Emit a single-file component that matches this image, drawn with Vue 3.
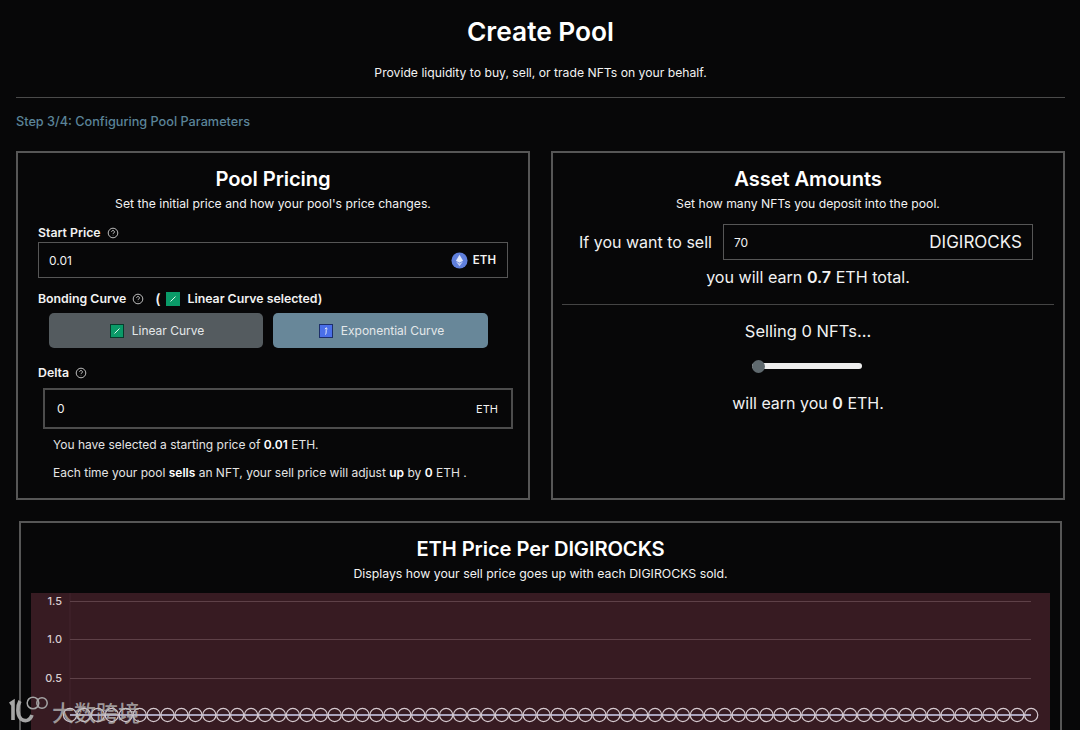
<script setup>
import { computed } from 'vue'

const chartWidth = 1019
const chartHeight = 140
const gridLines = [
  { label: '1.5', y: 8.5 },
  { label: '1.0', y: 46.5 },
  { label: '0.5', y: 85.5 },
]
const points = computed(() => Array.from({ length: 70 }, (_, i) => 39 + i * 13.93))
</script>

<template>
  <main class="page">
    <header class="head">
      <h1>Create Pool</h1>
      <p>Provide liquidity to buy, sell, or trade NFTs on your behalf.</p>
    </header>
    <div class="step">Step 3/4: Configuring Pool Parameters</div>

    <section class="panels">
      <div class="panel pricing">
        <h2>Pool Pricing</h2>
        <p class="sub">Set the initial price and how your pool's price changes.</p>

        <label class="field-label">Start Price
          <svg class="help" viewBox="0 0 12 12"><circle cx="6" cy="6" r="4.8" /><path d="M4.6 4.9a1.4 1.4 0 1 1 2.2 1.1c-.5.3-.8.6-.8 1.1M6 8.6v.3" /></svg>
        </label>
        <div class="input start">
          <span>0.01</span>
          <span class="unit">
            <svg class="eth" viewBox="0 0 18 18">
              <circle cx="9" cy="9" r="8.5" fill="#5f7fdc" />
              <path d="M9 2.8 5.2 9.2 9 11.4l3.8-2.2z" fill="#dfe6fb" />
              <path d="M9 12.3 5.2 10.1 9 15.2l3.8-5.1z" fill="#c3cff5" />
            </svg>
            <b>ETH</b>
          </span>
        </div>

        <div class="field-label curve-label">Bonding Curve
          <svg class="help" viewBox="0 0 12 12"><circle cx="6" cy="6" r="4.8" /><path d="M4.6 4.9a1.4 1.4 0 1 1 2.2 1.1c-.5.3-.8.6-.8 1.1M6 8.6v.3" /></svg>
          <span class="paren">(</span>
          <svg class="curve-icon" viewBox="0 0 14 14"><rect width="14" height="14" fill="#0a9a68" /><path d="M4.5 9.5 9.5 4.5" stroke="#d8f5e8" fill="none" /></svg>
          <span>Linear Curve selected)</span>
        </div>
        <div class="curve-buttons">
          <button class="linear">
            <svg class="curve-icon" viewBox="0 0 14 14"><rect x=".5" y=".5" width="13" height="13" fill="#0a9a68" stroke="#063d2c" /><path d="M4.5 9.5 9.5 4.5" stroke="#d8f5e8" fill="none" /></svg>
            Linear Curve
          </button>
          <button class="expo">
            <svg class="curve-icon" viewBox="0 0 14 14"><rect x=".5" y=".5" width="13" height="13" fill="#4a6fe8" stroke="#1d2f6b" /><path d="M6 10.5c1.2 0 1.2-2 1.2-6.5M5.9 5 7.2 3.8 8.5 5" stroke="#e4eafc" fill="none" /></svg>
            Exponential Curve
          </button>
        </div>

        <label class="field-label delta-label">Delta
          <svg class="help" viewBox="0 0 12 12"><circle cx="6" cy="6" r="4.8" /><path d="M4.6 4.9a1.4 1.4 0 1 1 2.2 1.1c-.5.3-.8.6-.8 1.1M6 8.6v.3" /></svg>
        </label>
        <div class="input delta">
          <span>0</span>
          <span class="unit-plain">ETH</span>
        </div>
        <p class="note first">You have selected a starting price of <b>0.01</b> ETH.</p>
        <p class="note">Each time your pool <b>sells</b> an NFT, your sell price will adjust <b>up</b> by <b>0</b> ETH .</p>
      </div>

      <div class="panel amounts">
        <h2>Asset Amounts</h2>
        <p class="sub">Set how many NFTs you deposit into the pool.</p>
        <div class="sell-row">
          <span>If you want to sell</span>
          <div class="input sell">
            <span class="qty">70</span>
            <span>DIGIROCKS</span>
          </div>
        </div>
        <p class="earn">you will earn <b>0.7</b> ETH total.</p>
        <hr />
        <p class="selling">Selling 0 NFTs...</p>
        <div class="slider"><span class="thumb"></span></div>
        <p class="earn-you">will earn you <b>0</b> ETH.</p>
      </div>
    </section>

    <section class="panel chart-panel">
      <h2>ETH Price Per DIGIROCKS</h2>
      <p class="sub">Displays how your sell price goes up with each DIGIROCKS sold.</p>
      <svg class="chart" :viewBox="`0 0 ${chartWidth} ${chartHeight}`" :width="chartWidth" :height="chartHeight">
        <rect :width="chartWidth" :height="chartHeight" fill="#371b22" />
        <line x1="39" y1="0" x2="39" y2="140" stroke="#42252c" />
        <g v-for="line in gridLines" :key="line.y">
          <line x1="39" :y1="line.y" x2="1000" :y2="line.y" stroke="#5e4148" />
          <text x="31" :y="line.y + 3.5" text-anchor="end" class="tick">{{ line.label }}</text>
        </g>
        <line x1="39" y1="122" x2="1000" y2="122" stroke="#a9a3bd" stroke-width="2" />
        <circle v-for="x in points" :key="x" :cx="x" cy="122" r="6.6" fill="none" stroke="#d5c9cf" stroke-width="1.2" />
      </svg>
    </section>

    <div class="watermark">
      <svg viewBox="0 0 40 30" width="40" height="30">
        <path d="M1 9 4 7v18M11 6c-3 5-3 14 1 18 4 3 9 2 11-4" fill="none" stroke="#a5a5a5" stroke-width="3.6" />
        <circle cx="24" cy="8" r="5.8" fill="none" stroke="#a5a5a5" stroke-width="1.5" />
        <circle cx="33" cy="8" r="5.2" fill="none" stroke="#a5a5a5" stroke-width="1.5" />
      </svg>
      <span>大数跨境</span>
    </div>
  </main>
</template>

<style>
html,
body {
  margin: 0;
  background: #070708;
  overflow: hidden;
}
</style>

<style scoped>
.page {
  position: relative;
  width: 1080px;
  height: 730px;
  overflow: hidden;
  box-sizing: border-box;
  padding: 0 15px 0 16px;
  color: #f2f2f2;
  font-family: Inter, 'Liberation Sans', sans-serif;
}

.head {
  height: 97px;
  border-bottom: 1px solid #4a4a4a;
  text-align: center;
}

.head h1 {
  margin: 0;
  padding-top: 15px;
  font-size: 26.3px;
  line-height: 34px;
  font-weight: 600;
  color: #fff;
}

.head p {
  margin: 15px 0 0;
  font-size: 12.2px;
  line-height: 18px;
}

.step {
  margin-top: 15px;
  font-size: 12.7px;
  line-height: 18px;
  font-weight: 500;
  color: #5b8499;
}

.panels {
  display: grid;
  grid-template-columns: 514px 514px;
  gap: 21px;
  margin-top: 20px;
}

.panel {
  box-sizing: border-box;
  border: 2px solid #565656;
  text-align: center;
}

.pricing,
.amounts {
  height: 349px;
  padding-top: 13px;
}

h2 {
  margin: 0;
  font-size: 20.2px;
  line-height: 26px;
  font-weight: 600;
  letter-spacing: -0.1px;
  color: #fff;
}

.sub {
  margin: 3px 0 0;
  font-size: 12.2px;
  line-height: 18px;
}

.pricing {
  padding-left: 20px;
  padding-right: 20px;
  text-align: left;
}

.pricing h2,
.pricing .sub {
  text-align: center;
}

.field-label {
  display: flex;
  align-items: center;
  gap: 6px;
  margin-top: 11px;
  font-size: 12.3px;
  line-height: 18px;
  font-weight: 600;
}

.help {
  width: 12px;
  height: 12px;
  fill: none;
  stroke: #d0d0d0;
  stroke-width: 0.9;
}

.input {
  box-sizing: border-box;
  display: flex;
  align-items: center;
  justify-content: space-between;
  border: 1px solid #565656;
  font-size: 12px;
}

.start {
  height: 36px;
  padding: 0 11px 0 10px;
}

.unit {
  display: flex;
  align-items: center;
  gap: 5px;
}

.unit b {
  font-size: 11.5px;
  font-weight: 600;
}

.eth {
  width: 17px;
  height: 17px;
}

.curve-label {
  margin-top: 12px;
}

.paren {
  margin-left: 5px;
  font-size: 14px;
}

.curve-icon {
  width: 14px;
  height: 14px;
  flex: none;
}

.curve-label span:last-child {
  margin-left: 1px;
}

.curve-buttons {
  display: grid;
  grid-template-columns: 214px 215px;
  gap: 10px;
  margin: 5px 0 0 11px;
}

.curve-buttons button {
  display: flex;
  align-items: center;
  justify-content: center;
  gap: 8px;
  height: 35px;
  padding: 0 0 0 2px;
  border: 0;
  border-radius: 5px;
  color: #e4e8ea;
  font: inherit;
  font-size: 12px;
}

.linear {
  background: #545b5f;
}

.expo {
  background: #688799;
}

.delta-label {
  margin-top: 16px;
}

.delta {
  width: 470px;
  height: 41px;
  margin: 6px 0 0 5px;
  padding: 0 13px 0 12px;
  border-width: 2px;
  border-color: #4c4c4c;
}

.unit-plain {
  font-size: 11px;
}

.note {
  margin: 10px 0 0 15px;
  font-size: 12px;
  line-height: 18px;
  color: #e4e4e4;
  white-space: nowrap;
}

.note.first {
  margin-top: 7px;
}

.note b {
  font-weight: 600;
  color: #fff;
}

.amounts hr {
  height: 1px;
  margin: 16px 9px 0;
  border: 0;
  background: #444;
}

.sell-row {
  display: flex;
  align-items: center;
  gap: 11px;
  margin: 11px 0 0 26px;
  font-size: 16px;
}

.sell {
  flex: none;
  width: 310px;
  height: 36px;
  padding: 0 10px;
  font-size: 17px;
}

.qty {
  font-size: 12px;
}

.earn {
  margin: 6px 0 0;
  font-size: 16.1px;
  line-height: 22px;
}

.selling {
  margin: 15px 0 0;
  font-size: 16.5px;
  line-height: 22px;
}

.slider {
  position: relative;
  width: 110px;
  height: 6px;
  margin: 21px auto 0 199px;
  border-radius: 3px;
  background: #eee;
}

.thumb {
  position: absolute;
  left: 0;
  top: -3.5px;
  width: 13px;
  height: 13px;
  border-radius: 50%;
  background: #5f696e;
}

.earn-you {
  margin: 23px 0 0;
  font-size: 16px;
  line-height: 22px;
}

.earn-you b,
.earn b {
  font-weight: 600;
}

.chart-panel {
  height: 260px;
  margin: 21px 3px 0;
  padding-top: 13px;
}

.chart-panel .sub {
  font-size: 12.3px;
}

.chart {
  display: block;
  margin: 10px 0 0 10px;
}

.tick {
  fill: #d8cdd0;
  font-size: 11px;
  font-weight: 500;
}

.watermark {
  position: absolute;
  left: 9px;
  top: 695px;
  display: flex;
  align-items: flex-start;
  gap: 3px;
  color: rgba(185, 185, 185, 0.8);
  font-family: 'Noto Sans CJK SC', sans-serif;
  font-size: 22px;
  font-weight: 500;
}

.watermark span {
  line-height: 32px;
}
</style>
